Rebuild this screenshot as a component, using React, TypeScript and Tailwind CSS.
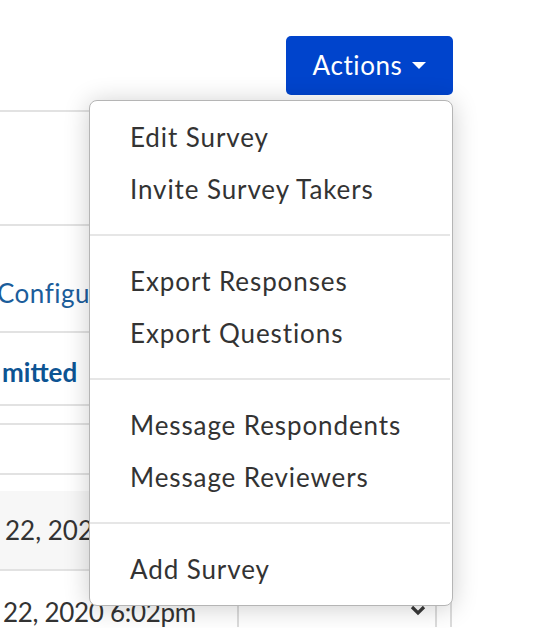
import React from "react";

const font = { fontFamily: "Lato, 'Noto Sans', sans-serif" };

function Divider() {
  return <div className="h-[2px] bg-[#e6e6e6] my-[19px] mr-[2px]" />;
}

function Item({ children }: { children: React.ReactNode }) {
  return (
    <div className="h-[52px] px-[40px] flex items-center text-[26px] tracking-[0.9px] text-[#333333] whitespace-nowrap">
      {children}
    </div>
  );
}

export default function App() {
  return (
    <div className="relative w-[538px] h-[628px] overflow-hidden bg-white" style={font}>
      <div className="h-[110px] flex justify-end items-start pt-[36px] pr-[85px]">
        <button className="w-[167px] h-[59px] rounded-[5px] bg-[#0044cc] text-white text-[26px] tracking-[0.6px] flex items-center justify-center gap-[10px]">
          <span>Actions</span>
          <svg width="14" height="7" viewBox="0 0 14 7">
            <polygon points="0,0 14,0 7,7" fill="white" />
          </svg>
        </button>
      </div>

      <div className="w-[452px] border-t-2 border-[#e2e2e2]">
        <div className="h-[114px] border-b-2 border-[#e2e2e2]" />
        <div className="h-[107px] border-b-2 border-[#e2e2e2] pt-[48px] pl-[1px] text-[26px] tracking-[0.5px] text-[#1b5d9b] whitespace-nowrap overflow-hidden">
          <span className="-ml-[4px]">Configure</span>
        </div>
        <div className="h-[73px] border-b-2 border-[#e2e2e2] pt-[20px] pl-[2px] text-[26px] font-bold text-[#0d5493]">
          mitted
        </div>
        <div className="h-[19px] border-b-2 border-[#e2e2e2]" />
        <div className="h-[50px] border-b-2 border-[#e2e2e2]" />
        <div className="h-[16px]" />
        <div className="h-[80px] bg-[#f7f7f7] border-b-2 border-[#e2e2e2] flex items-center pl-[5px] text-[26px] text-[#333333] whitespace-nowrap">
          22, 2020 6:02pm
        </div>
        <div className="h-[56px] flex">
          <div className="w-[237px] pt-[22px] pl-[3px] text-[26px] tracking-[-0.3px] text-[#333333] whitespace-nowrap">
            22, 2020 6:02pm
          </div>
          <div className="w-[198px] border-l-2 border-[#dcdcdc] flex justify-end items-start pt-[34px] pr-[9px]">
            <svg width="16" height="11" viewBox="0 0 16 11">
              <polyline points="2,2 8,8 14,2" fill="none" stroke="#3a3a3a" strokeWidth="3.2" />
            </svg>
          </div>
          <div className="w-[17px] border-l-2 border-r-2 border-[#dcdcdc]" />
        </div>
      </div>

      <div className="absolute left-[89px] top-[100px] w-[364px] h-[506px] rounded-[8px] border border-[#b5b5b5] bg-white shadow-[0_2px_26px_rgba(0,0,0,0.2)] py-[10px]">
        <Item>Edit Survey</Item>
        <Item>Invite Survey Takers</Item>
        <Divider />
        <Item>Export Responses</Item>
        <Item>Export Questions</Item>
        <Divider />
        <Item>Message Respondents</Item>
        <Item>Message Reviewers</Item>
        <Divider />
        <Item>Add Survey</Item>
      </div>
    </div>
  );
}
